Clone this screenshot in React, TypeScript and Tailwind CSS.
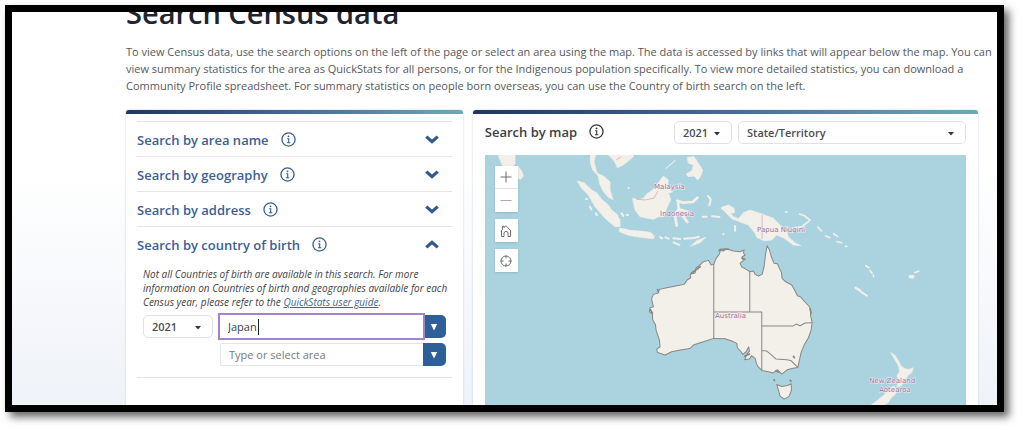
import { ReactNode, useState } from "react";

type IconProps = { className?: string };

function InfoIcon({ className }: IconProps) {
  return (
    <svg viewBox="0 0 16 16" fill="none" stroke="currentColor" className={className} aria-hidden="true">
      <circle cx="8" cy="8" r="7" strokeWidth="1.4" />
      <circle cx="8" cy="4.6" r="1" fill="currentColor" stroke="none" />
      <path d="M6.6 7.2h1.6v4.2M6.3 11.5h3.6" strokeWidth="1.2" />
    </svg>
  );
}

function Chevron({ open }: { open: boolean }) {
  return (
    <svg
      viewBox="0 0 14 9"
      fill="none"
      stroke="currentColor"
      strokeWidth="3.2"
      className={open ? "h-[9px] w-[14px] rotate-180" : "h-[9px] w-[14px]"}
      aria-hidden="true"
    >
      <path d="M1.3 1.6 7 6.6l5.7-5" />
    </svg>
  );
}

type DropdownProps = {
  label: string;
  options: string[];
  className: string;
};

function Dropdown({ label, options, className }: DropdownProps) {
  return (
    <div className={`relative ${className}`}>
      <select
        aria-label={label}
        className="block h-[23px] w-full appearance-none rounded-[5px] border border-[#dfe1e6] bg-white pl-2 text-[11px] font-semibold leading-4 text-[#4a4d52] outline-none"
      >
        {options.map((option) => (
          <option key={option}>{option}</option>
        ))}
      </select>
      <svg viewBox="0 0 6 4" className="pointer-events-none absolute right-3 top-[11px] h-1 w-[6px]" aria-hidden="true">
        <path d="M0 0h6L3 3.6z" fill="#33373c" />
      </svg>
    </div>
  );
}

type SectionProps = {
  title: string;
  open?: boolean;
  children?: ReactNode;
};

function Section({ title, open = false, children }: SectionProps) {
  return (
    <div className="border-t border-[#e3e6ec]">
      <h3>
        <button type="button" aria-expanded={open} className="flex h-[34px] w-full items-center pr-[13px] text-left text-[#3b5f93]">
          <span className="pt-px text-[13px] font-semibold leading-5">{title}</span>
          <InfoIcon className="ml-3 h-[15px] w-[15px]" />
          <span className="ml-auto text-[#31578f]">
            <Chevron open={open} />
          </span>
        </button>
      </h3>
      {children}
    </div>
  );
}

function ToggleButton({ label }: { label: string }) {
  return (
    <button type="button" aria-label={label} className="flex h-[23px] w-[23px] items-center justify-center rounded-r-[5px] bg-[#2f5f98]">
      <svg viewBox="0 0 8 8" className="h-2 w-2" aria-hidden="true">
        <path d="M.8 1h6.4L4 7.4z" fill="#fff" />
      </svg>
    </button>
  );
}

function CountryOfBirth() {
  const [country, setCountry] = useState("Japan");

  return (
    <div className="border-b border-[#e3e6ec] pb-[11px] pl-[6px] pr-[6px] pt-[6px]">
      <p className="-mr-3 text-[10px] italic leading-[14px] text-[#3f4246]">
        Not all Countries of birth are available in this search. For more information on Countries of birth and
        geographies available for each Census year, please refer to the{" "}
        <a href="#guide" className="text-[#3d6799] underline">
          QuickStats user guide
        </a>
        .
      </p>
      <div className="mt-[6px] flex gap-[7px]">
        <Dropdown label="Census year" options={["2021", "2016"]} className="w-[70px] shrink-0" />
        <div className="flex flex-1 flex-col gap-[5px]">
          <div className="flex">
            <div className="relative flex-1 ring-2 ring-[#a184cc]">
              <input
                type="text"
                aria-label="Country of birth"
                value={country}
                onChange={(e) => setCountry(e.target.value)}
                className="block h-[23px] w-full bg-white pl-2 text-[11px] text-[#3c4045] outline-none"
              />
              <span className="absolute left-[38px] top-1 h-4 w-px bg-[#222]" />
            </div>
            <ToggleButton label="Show countries" />
          </div>
          <div className="flex">
            <input
              type="text"
              aria-label="Area"
              placeholder="Type or select area"
              className="h-[23px] min-w-0 flex-1 border border-r-0 border-[#e3e6ec] bg-white pl-2 text-[11px] font-medium outline-none placeholder:text-[#75797f]"
            />
            <ToggleButton label="Show areas" />
          </div>
        </div>
      </div>
    </div>
  );
}

const mapLabels = [
  { text: "Malaysia", x: 654, y: 189 },
  { text: "Indonesia", x: 660, y: 216 },
  { text: "Papua Niugini", x: 757, y: 232 },
  { text: "Australia", x: 715, y: 318 },
  { text: "New Zealand", x: 869, y: 383 },
  { text: "Aotearoa", x: 879, y: 392 },
];

function AustraliaMap() {
  return (
    <svg viewBox="485 155 481 261" className="block w-full bg-[#aad3df]" role="img" aria-label="Map of Australia and surrounds">
      <g fill="#f3efe9" stroke="#f3efe9" strokeLinecap="round" strokeLinejoin="round">
        {/* India, Sri Lanka and South-East Asia */}
        <g transform="translate(480 150) scale(.33333)" strokeWidth="2">
          <path d="M52 10 60 30 68 48 80 75 95 60 105 40V10zM114 48 126 65 130 78 122 88 112 85z" />
          <path d="M331 10V38L338 60 355 78 358 100 370 125 385 142 399 149 390 120V95L370 78 352 70 347 55 342 35 348 10z" />
          <path d="M380 10 398 28 405 38 412 53 430 45 445 32 458 22 462 10z" />
          <path d="M292 93 312 98 335 120 350 128 365 148 385 165 395 180 405 188 420 210V230L405 230 375 205 345 170 325 135 305 115z" />
          <path d="M420 235 435 237 450 241 480 243 510 247 523 258 520 266 480 262 445 256 418 245z" />
          <path d="M458 145 475 149 490 145 500 132 515 122 530 105 550 78 565 90 563 110 578 125 566 130 572 150 562 170 550 200 535 200 520 208 495 203 480 200 465 180z" />
          <path d="M632 288 650 272 677 262 660 278z" />
          <path d="M318 147h3M330 170l4 8M347 190l4 5M425 190l5 8M440 195h4M406 192l6 6M445 114h1M540 261l6 4M556 262l10 4M580 265l20 2M612 266l30-2 14-4M580 277l18 8" strokeWidth="6" />
        </g>
        <g transform="translate(600 150) scale(.33333)" strokeWidth="2">
          <path d="M262 22 282 20 295 40 308 60 302 78 293 90 282 78 265 80 258 72 275 62 280 45 266 40z" />
          <path d="M198 55 225 32" strokeWidth="3" />
          <path d="M232 152 248 158 278 156 292 143M234 160 236 178 224 192 230 227M238 178 262 185M240 188 262 216" fill="none" strokeWidth="8" />
          <path d="M324 138 332 148 328 166M336 199 358 201M308 200h12M370 252v1M405 228v14M366 176h10M62 16l4-1" fill="none" strokeWidth="6" />
          <path d="M364 172 385 165 402 175 403 188 390 190 400 200 415 206 430 188 450 180 485 192 520 205 545 230 560 245 565 262 585 278 602 287 580 285 552 265 530 255 515 270 490 272 470 262 465 250 445 225 415 214 395 206 375 186z" />
        </g>
        {/* Pacific islands */}
        <g transform="translate(760 150) scale(.33333)" fill="none" strokeWidth="5">
          <path d="M97 235 125 230 145 215M118 192 135 198 150 211M75 186h6M173 231 184 243M196 258 209 263M220 251 232 259M231 275 245 278M256 289h4M317 347 326 353M330 362 336 370M340 376v4M288 414 300 420" />
          <path d="M450 380h8" strokeWidth="10" />
          <path d="M464 368 476 363" />
        </g>
        <g transform="translate(800 280) scale(.33333)" strokeWidth="2">
          <path d="M166 23 200 47" strokeWidth="6" />
          <path d="M272 218 285 226 295 243 302 256 312 265 325 268 339 263 336 276 322 288 315 300 302 318 290 320 298 300 290 288 298 275 296 260 285 240z" />
          <path d="M212 376 235 358 252 345 262 330 280 318 292 328 286 342 272 354 266 366 252 374 245 390 205 390z" />
        </g>
      </g>

      <g fill="none" stroke="#c9a5b5" strokeWidth=".7">
        <path d="M636 199 645 200 654 198 658 191M762 215V239M616 160l5-3" />
      </g>

      {/* Australian states and territories */}
      <g transform="translate(640 235) scale(.33333)" fill="#f3efe9" stroke="#8a8682" strokeWidth="3" strokeLinejoin="round">
        <path d="M221 88 228 70 238 57 240 50 236 46 250 48 258 42 268 44 280 48 300 50 312 45 310 54 315 60 306 66 310 76 300 85 305 95 318 103 330 110 340 108 345 118 355 123 366 118 372 95 376 60 381 32 388 45 394 66 402 85 412 86 418 100 424 112 426 130 436 140 444 144 455 150 465 168 472 182 482 186 494 200 508 215 512 228 511 240 516 262 513 285 505 308 492 330 483 352 478 375 473 397 455 400 440 405 425 417 412 404 398 414 385 410 366 406 355 396 350 388 345 370 334 362 328 372 314 374 320 358 328 348 326 335 318 350 308 358 303 350 292 338 290 325 275 318 255 311 221 310 190 320 160 330 150 340 120 345 95 350 75 360 52 352 50 342 60 335 58 315 48 285 46 268 38 255 37 238 28 230 30 218 40 215 36 200 35 190 40 178 54 174 58 163 80 158 110 152 132 148 142 134 152 128 150 118 165 114 168 98 178 92 190 80 205 76 213 90z" />
        <path d="M221 88V310M221 231H365V406M329 108V231M366 273H458L468 267 480 272 495 264 516 263M366 346 380 348 392 358 408 372 440 374 452 376 473 397" fill="none" />
        <path d="M410 448 425 454 440 452 453 446 454 465 447 484 432 492 420 483 415 465z" />
        <path d="M401 432l3 6M449 434l5 6M459 362l5 8M30 222l8 14M152 116l30-22M238 44l28-2M304 68l12 6M312 364l18-8M406 406l12 6M510 220l3 18M52 162l4 10" fill="none" strokeWidth="5" />
      </g>

      <g fill="#9b6f9f" stroke="#f5f0f2" strokeWidth="1" paintOrder="stroke" className="font-['DejaVu_Sans',sans-serif] text-[7px]">
        {mapLabels.map(({ text, x, y }) => (
          <text key={text} x={x} y={y}>
            {text}
          </text>
        ))}
      </g>
    </svg>
  );
}

function MapControls() {
  const button = "flex h-[23px] w-[23px] items-center justify-center bg-white text-[#6e6e6e]";

  return (
    <div className="absolute left-[10px] top-[11px] flex flex-col gap-[7px]">
      <div className="shadow">
        <button type="button" aria-label="Zoom in" className={`${button} border-b border-[#e0e0e0]`}>
          <svg viewBox="0 0 12 12" stroke="currentColor" className="h-3 w-3">
            <path d="M6 .5v11M.5 6h11" />
          </svg>
        </button>
        <button type="button" aria-label="Zoom out" className={button}>
          <svg viewBox="0 0 12 12" stroke="#aaa" className="h-3 w-3">
            <path d="M.5 5.5h11" />
          </svg>
        </button>
      </div>
      <button type="button" aria-label="Default view" className={`${button} shadow`}>
        <svg viewBox="0 0 12 12" fill="none" stroke="currentColor" className="h-3 w-3">
          <path d="M.8 6.200 2.500 4.300V1.200H4V2.600L5.500 1.200h1L11.200 6.200M1.500 5.500v6H4V8l1-1.500h2L8 8v3.500h2.500v-6" />
        </svg>
      </button>
      <button type="button" aria-label="Find my location" className={`${button} shadow`}>
        <svg viewBox="0 0 12 12" fill="none" stroke="currentColor" className="h-3 w-3">
          <circle cx="6" cy="6" r="5" />
          <path d="M6 .5v3M6 8.500v3M.5 6h3M8.500 6h3" />
        </svg>
      </button>
    </div>
  );
}

function Card({ children }: { children: ReactNode }) {
  return (
    <section className="overflow-hidden rounded-t-[3px] bg-white shadow-[0_0_2px_#b8c8d8]">
      <div className="h-[4px] bg-linear-to-r from-[#1f3566] via-[#44699a] to-[#6aabb5]" />
      {children}
    </section>
  );
}

export default function App() {
  return (
    <div className="h-screen bg-white pb-[19px] pl-[5px] pr-5 pt-[5px] font-['Open_Sans',sans-serif]">
      <main className="h-full overflow-hidden border-[7px] border-black bg-linear-to-b from-white from-40% to-[#eff2f8] pl-[114px] pr-[19px] shadow-[5px_5px_8px_rgba(0,0,0,0.6)]">
        <h1 className="-mt-[17px] text-[29px] font-semibold leading-9 text-[#20242f]">Search Census data</h1>
        <p className="-mr-4 mt-3 text-[11px] leading-[17px] text-[#55585e]">
          To view Census data, use the search options on the left of the page or select an area using the map. The data
          is accessed by links that will appear below the map. You can view summary statistics for the area as QuickStats
          for all persons, or for the Indigenous population specifically. To view more detailed statistics, you can
          download a Community Profile spreadsheet. For summary statistics on people born overseas, you can use the
          Country of birth search on the left.
        </p>
        <div className="mt-4 grid grid-cols-[2fr_3fr] gap-[10px]">
          <Card>
            <div className="px-[11px] pb-12 pt-[7px]">
              <Section title="Search by area name" />
              <Section title="Search by geography" />
              <Section title="Search by address" />
              <Section title="Search by country of birth" open>
                <CountryOfBirth />
              </Section>
            </div>
          </Card>
          <Card>
            <div className="px-3 pt-[7px]">
              <div className="flex h-[34px] items-start">
                <h2 className="text-[13px] font-semibold leading-[22px] text-[#3a3e44]">Search by map</h2>
                <InfoIcon className="ml-3 mt-[3px] h-[15px] w-[15px] text-[#33373d]" />
                <Dropdown label="Map year" options={["2021", "2016"]} className="ml-auto w-[58px]" />
                <Dropdown
                  label="Geography"
                  options={["State/Territory", "Local Government Area"]}
                  className="ml-[6px] w-[228px]"
                />
              </div>
              <div className="relative">
                <AustraliaMap />
                <MapControls />
              </div>
            </div>
          </Card>
        </div>
      </main>
    </div>
  );
}
